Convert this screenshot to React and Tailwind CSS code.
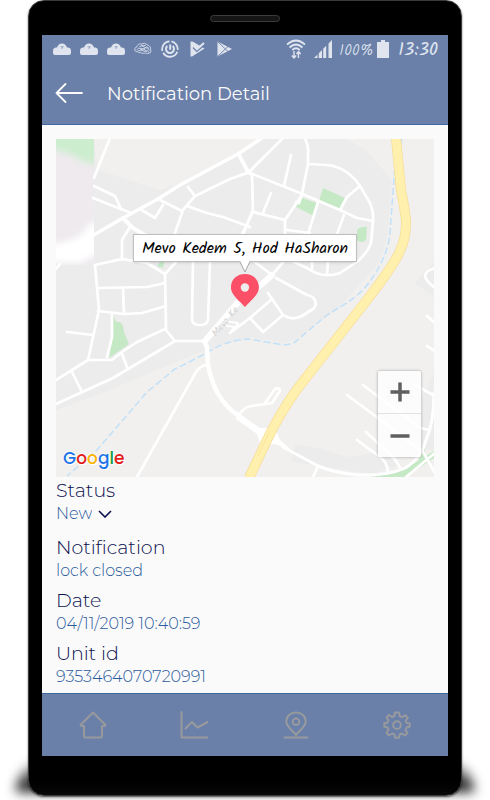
import React from "react";

const urban = "#ececec";

const streets = [
  "M110 138L94 178",
  "M94 186L115 196L121 209",
  "M93 198L131 213",
  "M238 154L248 173",
  "M250 172L230 179L195 196L183 210L174 236",
  "M188 187L195 196",
  "M158 199L182 211",
  "M140 209L155 218L163 205",
  "M187 206L207 213L223 217L250 227",
  "M130 227L122 240V260",
  "M95 265L122 259L147 263L165 274L176 262",
  "M95 265L99 310L88 360L56 380",
  "M99 288L147 287L165 283",
  "M123 288L124 314",
  "M98 311L124 314L142 313L166 306",
  "M165 274L166 329",
  "M193 262L192 320Q193 325 200 325Q207 325 208 320L210 262",
  "M243 235L252 212",
  "M55 270L60 264",
  "M67 332L93 335",
  "M88 360H112L122 352L137 342L165 329L175 341H204",
  "M175 341L113 378L56 404",
  "M72 372L81 390",
  "M122 354L127 367",
  "M112 315V337L107 357",
  "M206 365Q200 366 196 372L137 477",
  "M239 415Q244 407 251 406L272 403L280 391Q280 387 275 389L265 403",
  "M318 466L313 477",
  "M347 395L378 418L422 452",
  "M363 385L420 428L430 430",
  "M357 440L380 457Q387 462 388 472",
  "M366 432L394 458L401 469",
  "M415 385L435 396",
  "M427 316L435 323",
  "M427 346L435 351",
  "M422 450L435 473",
  "M435 453L406 477",
  "M230 333L250 318L272 299",
  "M250 318L263 332L283 315L268 293",
  "M283 315Q292 321 302 316L313 309Q317 306 315 300Q313 296 307 295L276 278",
  "M283 138L248 173L240 175",
  "M240 156L250 174",
  "M250 173L300 193L340 210L357 218L373 221",
  "M252 175L253 212L240 238",
  "M253 212L285 220L302 195",
  "M271 193L263 213",
  "M291 155L284 186",
  "M305 138Q309 147 308 155V164L302 194L299 203L296 202",
  "M308 164L327 165Q347 167 360 186L370 203Q374 212 373 222L371 243Q368 252 358 261L340 273Q322 279 307 268L290 260",
  "M360 186L347 197L340 210",
  "M285 220V238",
  "M287 230L310 233",
  "M318 202L308 234",
  "M344 215L336 237",
  "M312 261V269",
  "M328 261L327 275",
  "M435 268Q425 271 425 276Q426 281 435 288",
  "M255 262L272 275L285 260",
];

function MapArt() {
  return (
    <svg viewBox="56 139 378 338" preserveAspectRatio="xMidYMid slice" className="block h-full w-full" aria-hidden="true">
      <defs>
        <filter id="soft" x="-20%" y="-20%" width="140%" height="140%">
          <feGaussianBlur stdDeviation="3" />
        </filter>
        <clipPath id="corner">
          <rect x="56" y="139" width="38" height="126" />
        </clipPath>
      </defs>
      <rect x="56" y="139" width="378" height="338" fill="#f1f0ee" />
      <path
        fill={urban}
        d="M56 139H94L98 170L160 190L185 182L250 148L262 139H347L366 150L392 180L388 233L380 262L340 307L295 340L283 343L250 337L205 350L100 394L56 410Z"
      />
      <path fill={urban} d="M415 283L434 262V297Z M295 444L318 448L347 457L380 452L400 465L373 474L318 466L291 462Z M434 372L422 400V450H434Z" />
      <g clipPath="url(#corner)">
        <rect x="56" y="139" width="38" height="126" fill="#eeeaee" />
        <path filter="url(#soft)" fill="#cdedcf" d="M45 130H100V164Q83 164 72 155L50 148Z" />
        <path filter="url(#soft)" fill="#ffffff" d="M45 246L70 240Q84 236 89 224L102 220V252L80 263H45Z" />
      </g>
      <g fill="#c5e8c5">
        <path d="M94 185h2v2h-2Z" />
        <path d="M323 188L347 199L341 210L319 201Z" />
        <path d="M302 198L317 203L314 216L296 207Z" />
        <path d="M357 230Q361 226 367 227L366 240Q362 244 357 240Z" />
        <path d="M160 262H164L163 268L157 266Z" />
        <path d="M113 315L116 322Q123 320 124 332L129 344L109 358L113 337Z" />
        <path d="M434 405L430 432L424 447L426 456L434 451V458L406 477H370L395 473L418 461L424 447Z" />
      </g>
      <path
        d="M402 139L395 165L390 233Q387 262 363 290Q350 302 335 310L327 315L295 342Q288 346 278 344L250 339Q227 339 203 355L175 369L147 392L97 450L67 476"
        fill="none"
        stroke="#c2e0f8"
        strokeWidth="1.5"
        strokeDasharray="7 3"
      />
      <g fill="none" stroke="#ffffff" strokeWidth="2.700" strokeLinejoin="round" strokeLinecap="round">
        {streets.map((d) => (
          <path key={d} d={d} />
        ))}
        <path strokeWidth="3.4" d="M92 236L123 218L158 199L180 185L238 154L262 138" />
        <path strokeWidth="4" d="M123 218L133 228L150 238" />
        <path strokeWidth="6" d="M272 275L262 284L240 300L228 314L205 341" />
        <path strokeWidth="4.5" d="M204 341L207 347L208 365Q211 380 217 392Q226 408 238 415L260 432" />
        <path strokeWidth="3" d="M283 447L318 466Q335 473 358 475Q390 476 407 467Q422 457 426 440Q434 422 434 393" />
        <path strokeWidth="2" d="M225 321L238 323M227 326L235 327M231 331L238 324" />
      </g>
      <path fill="#ffffff" d="M236 412L260 428H275L280 440L290 449L274 444L261 446L257 434L236 419Z" />
      <path
        d="M396 138L401 190Q406 215 406 223Q406 238 400 251Q394 265 367 300L298 388Q281 411 267 440L249 478"
        fill="none"
        stroke="#f8dc94"
        strokeWidth="10"
      />
      <path
        d="M396 138L401 190Q406 215 406 223Q406 238 400 251Q394 265 367 300L298 388Q281 411 267 440L249 478"
        fill="none"
        stroke="#fff0ae"
        strokeWidth="8.6"
      />
      <path d="M270 431L258 456" fill="none" stroke="#f8dc94" strokeWidth="0.7" />
      <text x="216" y="337" transform="rotate(-50 216 337)" fontSize="10" fill="#d2d2d2" fontFamily="Kalam, sans-serif">
        Mevo Ke
      </text>
    </svg>
  );
}

function Cloud() {
  return (
    <svg viewBox="0 0 18 12" className="h-3 w-[18px]" aria-hidden="true">
      <path fill="#dfe4ef" d="M2.500 4.500H4Q5.500 0.500 9 0.500T14 4.500H15.500Q18 5 18 7.500V10Q18 12 16 12H2Q0 12 0 10V7.500Q0 5 2.500 4.500Z" />
      <path fill="none" stroke="#8798b9" strokeWidth="0.900" d="M7.500 3.800H10M8.800 5.800L10.300 3.500" />
    </svg>
  );
}

function StatusBar() {
  return (
    <div className="flex h-[27px] items-center justify-between pl-[11px] pr-[10px] text-[#dfe4ef]">
      <div className="flex items-center gap-[9px]">
        <Cloud />
        <Cloud />
        <Cloud />
        <svg viewBox="0 0 20 13" className="h-[13px] w-[18px]" fill="none" stroke="#dfe4ef" strokeWidth="0.9" aria-hidden="true">
          <path d="M4 10Q0 10 1 7Q1 5 3 5Q4 1 8 1.500Q12 -0.500 15 2.500Q19 4 18.500 8Q20 11 16.500 12Q15 12.500 13 11.500Q9 12.500 7 11Q5 11.500 4 10Z" />
          <path d="M3 8Q5 5 8 6.500T13 5.500T17 8.500M6 4.500Q9 2.500 11 4.500T16 6M4 9.500Q7 7.500 10 9T15 8.500L16.500 11M8 3Q10 4 13 2.800M7 8L11 6.800L14 10.500" />
        </svg>
        <svg viewBox="0 0 18 18" className="h-[18px] w-[18px]" fill="none" stroke="#dfe4ef" aria-hidden="true">
          <path strokeWidth="1.800" d="M10.500 1.400A7.800 7.800 0 0 1 16.700 9.800M16.300 11.700A7.800 7.800 0 0 1 2.200 12.800M1.400 11A7.800 7.800 0 0 1 8.500 1.300" />
          <path strokeWidth="2" d="M6.300 6A4 4 0 1 0 11.700 6M9.200 4.500V9.800" />
        </svg>
        <svg viewBox="0 0 18 16" className="h-4 w-[18px]" aria-hidden="true">
          <path fill="#dfe4ef" d="M2.500 0.500H4.500L16.500 7.500L4 15.500H2.500Z" />
          <path fill="none" stroke="#6a80a9" strokeWidth="1.300" d="M5 6.500L8.800 10.300L16.500 4" />
          <path fill="none" stroke="#dfe4ef" strokeWidth="2.200" d="M6 5L9 8L16 2" />
        </svg>
        <svg viewBox="0 0 18 16" className="h-4 w-[18px]" aria-hidden="true">
          <path fill="#dfe4ef" d="M2.500 0.500L17 8L2.500 15.500Z" />
          <path fill="none" stroke="#6a80a9" strokeWidth="0.900" d="M3 1L13.500 11M3 15L13.500 5" />
        </svg>
      </div>
      <div className="flex items-center font-[Kalam,cursive]">
        <svg viewBox="0 0 20 20" className="mr-2 h-5 w-5" fill="none" stroke="#dfe4ef" strokeWidth="1.800" aria-hidden="true">
          <path d="M1 5.500Q10 -2.500 19 5.500M3.500 8.500Q10 2.500 16.500 8.500M6.300 11Q10 7.500 13.700 11" />
          <path strokeWidth="1.400" d="M8 12V19M5.800 16.500L8 19L10.200 16.500M12.500 19V12.500M10.500 15L12.500 12.500L14.700 15" />
        </svg>
        <svg viewBox="0 0 19 19" className="mr-[6px] h-[19px] w-[19px]" fill="#dfe4ef" aria-hidden="true">
          <path d="M0 19L3.500 15.500V19ZM4.800 14.200L8 11V19H4.800ZM9.200 9.800L12.200 6.800V19H9.200ZM14.500 4.500L18 1V19H14.500Z" />
        </svg>
        <span className="mr-1 pt-1 text-base leading-5 font-light">100%</span>
        <svg viewBox="0 0 12 18" className="mr-[9px] h-[18px] w-3" fill="#dfe4ef" aria-hidden="true">
          <path d="M4 0H8V2H12V18H0V2H4Z" />
        </svg>
        <span className="pt-1 text-lg leading-5">13:30</span>
      </div>
    </div>
  );
}

function Header() {
  return (
    <header className="border-b border-[#3f68a0] bg-[#6a80a9]">
      <StatusBar />
      <div className="flex h-[62px] items-center gap-6 px-[13px] text-[#fafafa]">
        <button type="button" aria-label="Back" className="flex">
          <svg viewBox="0 0 28 20" className="h-5 w-7" fill="none" stroke="currentColor" strokeWidth="1.800" strokeLinecap="round" strokeLinejoin="round" aria-hidden="true">
            <path d="M10.500 1L1.500 10L10.500 19M1.500 10H27" />
          </svg>
        </button>
        <h1 className="pt-[2px] text-lg leading-6">Notification Detail</h1>
      </div>
    </header>
  );
}

function MapPanel() {
  return (
    <div className="relative aspect-[378/338] w-full overflow-hidden">
      <MapArt />
      <div className="absolute bottom-1/2 left-1/2 flex -translate-x-1/2 flex-col items-center pb-px">
        <div className="h-7 border border-[#bdbdbd] bg-white px-2 pt-[2px] font-[Kalam,cursive] text-base leading-6 whitespace-nowrap text-black shadow-sm">
          Mevo Kedem 5, Hod HaSharon
        </div>
        <svg viewBox="0 0 28 46" className="-mt-px h-[46px] w-7" aria-hidden="true">
          <path fill="#ffffff" d="M9 0H19L14 10.500Z" />
          <path fill="none" stroke="#a8a8a8" d="M9 0.500L14 11L19 0.500" />
          <path fill="#fb5068" d="M14 13C6 13 0 18.500 0 26.500C0 34 9 40 14 46C19 40 28 34 28 26.500C28 18.500 22 13 14 13Z" />
          <circle cx="14" cy="26.500" r="4.200" fill="#eeeeee" />
        </svg>
      </div>
      <a href="#map" aria-label="Google" className="absolute bottom-[7px] left-[7px] font-[Poppins,sans-serif] text-[17px] leading-6 font-medium [text-shadow:0_0_2px_white,0_0_2px_white,1px_1px_1px_white]">
        <span className="text-[#1a73e8]">G</span>
        <span className="text-[#e21b1b]">o</span>
        <span className="text-[#fbb505]">o</span>
        <span className="text-[#1a73e8]">g</span>
        <span className="text-[#149a3c]">l</span>
        <span className="text-[#e21b1b]">e</span>
      </a>
      <div className="absolute right-[13px] bottom-5 flex w-[43px] flex-col divide-y divide-[#e2e2e2] rounded-xs bg-white/80 shadow-[0_0_3px_rgba(0,0,0,0.35)]">
        <button type="button" aria-label="Zoom in" className="flex h-[43px] items-center justify-center">
          <svg viewBox="0 0 20 20" className="h-5 w-5" aria-hidden="true">
            <path stroke="#606060" strokeWidth="3.500" d="M0.500 10H19.500M10 0.500V19.500" />
          </svg>
        </button>
        <button type="button" aria-label="Zoom out" className="flex h-[43px] items-center justify-center">
          <svg viewBox="0 0 20 20" className="h-5 w-5" aria-hidden="true">
            <path stroke="#606060" strokeWidth="3.500" d="M0.500 10H19.500" />
          </svg>
        </button>
      </div>
    </div>
  );
}

const details = [
  ["Notification", "lock closed"],
  ["Date", "04/11/2019 10:40:59"],
  ["Unit id", "9353464070720991"],
];

function Details() {
  return (
    <div className="pt-[2px]">
      <div className="mb-[11px]">
        <label htmlFor="status" className="block text-[19px] leading-6 font-light text-[#0b1050]">
          Status
        </label>
        <div className="flex h-[22px] items-center gap-[6px]">
          <select id="status" defaultValue="New" className="field-sizing-content appearance-none bg-transparent text-base leading-[22px] font-light text-[#2d5c9e]">
            <option>New</option>
          </select>
          <svg viewBox="0 0 14 8" className="h-2 w-[14px]" fill="none" stroke="#0b1050" strokeWidth="1.600" aria-hidden="true">
            <path d="M1 1L7 7L13 1" />
          </svg>
        </div>
      </div>
      <dl className="flex flex-col gap-[7px]">
        {details.map(([name, value]) => (
          <div key={name}>
            <dt className="text-[19px] leading-6 font-light text-[#0b1050]">{name}</dt>
            <dd className="text-base leading-[22px] font-light text-[#2d5c9e]">{value}</dd>
          </div>
        ))}
      </dl>
    </div>
  );
}

const tabs = [
  ["Home", "M14 1.500L1.500 14L2.500 15H5V25Q5 26.500 6.500 26.500H21.500Q23 26.500 23 25V15H25.500L26.500 14Z"],
  ["Statistics", "M1.500 1V26.500H27.500M5.500 17.500L12 11L17.500 16.500L27.500 11"],
  [
    "Locations",
    "M14 24C12.500 21 4.300 16 4.300 10.500C4.300 5 8.500 1.500 14 1.500C19.500 1.500 23.700 5 23.700 10.500C23.700 16 15.500 21 14 24ZM14 7.500A3.300 3.300 0 1 0 14 14.100A3.300 3.300 0 1 0 14 7.500ZM2.500 26.500H25.500",
  ],
  [
    "Settings",
    "M12 1.500H16L16.700 5L19.500 6.200L22.500 4.200L24.800 7L22.700 9.700L23.700 12L26.700 12.300V15.700L23.700 16.300L22.500 19L24.500 22L21.800 24.500L19 22.500L16.500 23.500L16 26.700H12L11.500 23.500L9 22.500L6 24.500L3.500 22L5.500 19L4.400 16.300L1.300 15.700V12.300L4.400 11.700L5.500 9.200L3.500 6.500L6 4L9 6L11.400 5ZM14 10.200A3.900 3.900 0 1 0 14 18A3.900 3.900 0 1 0 14 10.200Z",
  ],
];

function TabBar() {
  return (
    <nav className="grid h-[63px] grid-cols-4 border-t border-[#3f68a0] bg-[#6a80a9]">
      {tabs.map(([name, path]) => (
        <a key={name} href={"#" + name.toLowerCase()} aria-label={name} className="flex items-center justify-center">
          <svg viewBox="0 0 28 28" className="h-7 w-7" fill="none" stroke="#98999d" strokeWidth="2" strokeLinecap="round" strokeLinejoin="round" aria-hidden="true">
            <path d={path} />
          </svg>
        </a>
      ))}
    </nav>
  );
}

export default function App() {
  return (
    <div className="min-h-screen overflow-hidden bg-white px-7 pb-1 font-[Montserrat,Inter,sans-serif]">
      <div className="relative isolate mx-auto max-w-[434px]">
        <div className="absolute -right-3 bottom-1 -left-3 -z-10 h-8 rounded-t-full bg-linear-to-t from-black to-black/20 blur-[6px]" />
        <div className="rounded-[16px] border border-[#3a3a3a] bg-linear-to-b from-black from-97% to-[#0a0a0a] px-[13px] pb-[39px] shadow-[0_1px_2px_rgba(0,0,0,0.6)]">
          <div className="flex h-[34px] items-center justify-center">
            <div className="h-[7px] w-[70px] rounded-full border border-[#3c3c3c] bg-[#151515]" />
          </div>
          <main className="bg-[#fafafa]">
            <Header />
            <section className="px-[14px] pt-[14px] pb-[5px]">
              <MapPanel />
              <Details />
            </section>
            <TabBar />
          </main>
        </div>
      </div>
    </div>
  );
}
